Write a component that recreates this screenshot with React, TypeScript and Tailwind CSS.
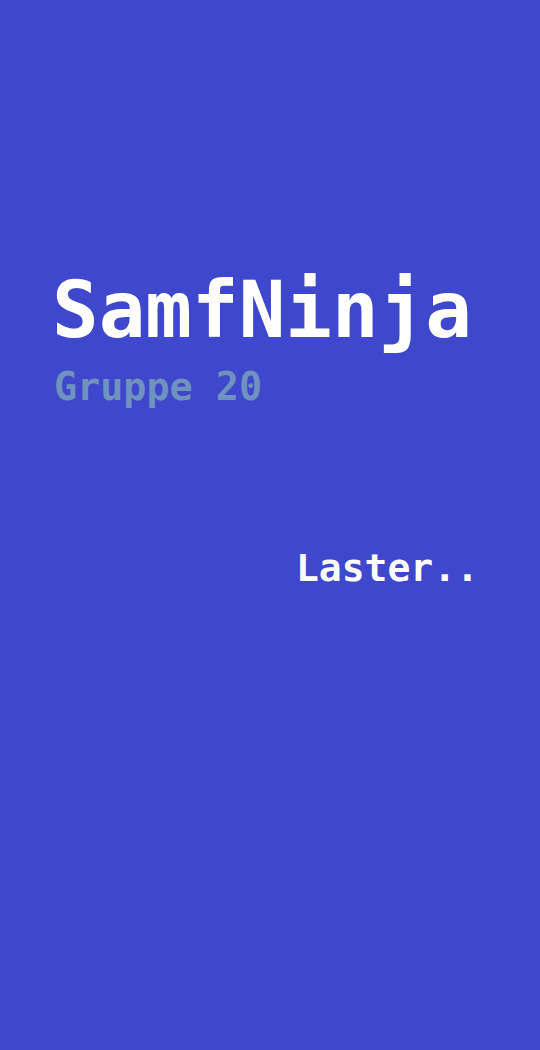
export default function App() {
  return (
    <div
      className="flex h-[1050px] w-[540px] flex-col bg-[#3f48cc] pl-[52px] pr-[61px] pt-[272px] font-bold"
      style={{ fontFamily: '"DejaVu Sans Mono", monospace' }}
    >
      <h1 className="text-[77.5px] leading-none text-white">SamfNinja</h1>
      <p className="mt-[18px] pl-[2px] text-[38.4px] leading-none text-[#7092be]">
        Gruppe 20
      </p>
      <p className="mt-[143px] self-end text-[38px] leading-none text-white">
        Laster..
      </p>
    </div>
  );
}
